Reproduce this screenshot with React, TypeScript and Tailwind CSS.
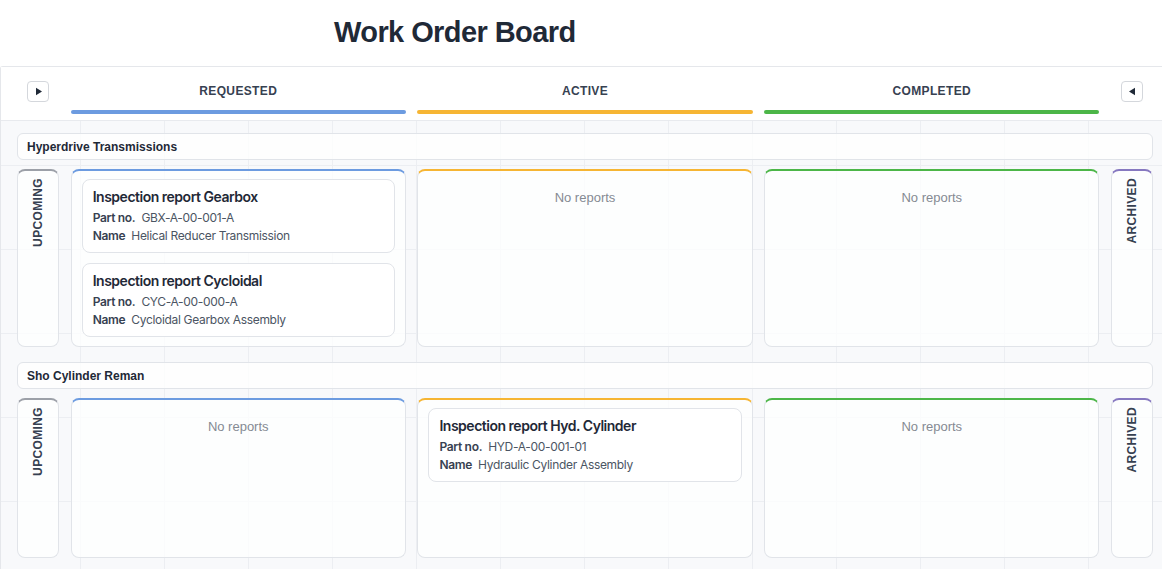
import React from "react";

type Card = { title: string; part: string; name: string };
type Group = {
  name: string;
  requested: Card[];
  active: Card[];
  completed: Card[];
};

const groups: Group[] = [
  {
    name: "Hyperdrive Transmissions",
    requested: [
      { title: "Inspection report Gearbox", part: "GBX-A-00-001-A", name: "Helical Reducer Transmission" },
      { title: "Inspection report Cycloidal", part: "CYC-A-00-000-A", name: "Cycloidal Gearbox Assembly" },
    ],
    active: [],
    completed: [],
  },
  {
    name: "Sho Cylinder Reman",
    requested: [],
    active: [{ title: "Inspection report Hyd. Cylinder", part: "HYD-A-00-001-01", name: "Hydraulic Cylinder Assembly" }],
    completed: [],
  },
];

const sans = "font-['Liberation_Sans',Arial,sans-serif]";

function Toggle({ dir }: { dir: "right" | "left" }) {
  return (
    <button className="w-[22px] h-[21px] rounded-[4px] border border-[#d4d7dc] bg-white flex items-center justify-center">
      <svg width="9" height="9" viewBox="0 0 9 9">
        {dir === "right" ? (
          <polygon points="2,0.8 8,4.5 2,8.2" fill="#1f2937" />
        ) : (
          <polygon points="7,0.8 1,4.5 7,8.2" fill="#1f2937" />
        )}
      </svg>
    </button>
  );
}

function HeaderLabel({ label, bar }: { label: string; bar: string }) {
  return (
    <div className="flex flex-col items-stretch pt-[16px]">
      <div className={`${sans} text-[12px] leading-[16px] font-bold tracking-[0.03em] text-[#374151] text-center`}>{label}</div>
      <div className={`mt-[11px] h-[4px] rounded-full ${bar}`} />
    </div>
  );
}

function ReportCard({ c }: { c: Card }) {
  return (
    <div className="bg-white border border-[#e1e4e9] rounded-lg px-[10px] pt-[7px] pb-[7px] font-['Inter',sans-serif] tracking-[-0.02em]">
      <div className="text-[14px] leading-[20px] font-semibold tracking-[-0.035em] text-[#1f2937]">{c.title}</div>
      <div className="mt-[2px] text-[12px] leading-[18px] text-[#4b5563]">
        <span className="font-semibold text-[#374151]">Part no.</span>
        <span className="ml-[6px]">{c.part}</span>
      </div>
      <div className="text-[12px] leading-[18px] text-[#4b5563]">
        <span className="font-semibold text-[#374151]">Name</span>
        <span className="ml-[6px]">{c.name}</span>
      </div>
    </div>
  );
}

function Lane({ cards, top, min }: { cards: Card[]; top: string; min: string }) {
  return (
    <div className={`rounded-lg border border-[#e1e4e9] border-t-2 ${top} bg-white/75 px-[10px] pt-[8px] pb-[9px] ${min}`}>
      {cards.length === 0 ? (
        <div className={`${sans} pt-[9px] text-center text-[13px] leading-[20px] text-[#858a93]`}>No reports</div>
      ) : (
        <div className="flex flex-col gap-[10px]">
          {cards.map((c) => (
            <ReportCard key={c.title} c={c} />
          ))}
        </div>
      )}
    </div>
  );
}

function SideLane({ label, top }: { label: string; top: string }) {
  return (
    <div className={`rounded-lg border border-[#e1e4e9] border-t-2 ${top} bg-white/75 flex justify-center pt-[7px]`}>
      <div
        className={`${sans} text-[12px] leading-[14px] font-bold tracking-[0.03em] text-[#374151] [writing-mode:vertical-rl] rotate-180 h-fit`}
      >
        {label}
      </div>
    </div>
  );
}

export default function App() {
  return (
    <div className="w-[1162px] h-[569px] overflow-hidden bg-white">
      <div className="h-[66px] flex items-center pl-[334px]">
        <h1 className={`${sans} text-[29px] font-bold tracking-[-0.02em] text-[#1f2937] leading-none pb-[1px]`}>Work Order Board</h1>
      </div>
      <div className="border-t border-l border-[#e5e7eb] rounded-tl-[3px]">
        <div className="grid grid-cols-[42px_1fr_1fr_1fr_42px] gap-x-[11.7px] pl-[16px] pr-[9px] h-[54px] border-b border-[#e8eaee] bg-white">
          <div className="flex justify-center pt-[14px]">
            <Toggle dir="right" />
          </div>
          <HeaderLabel label="REQUESTED" bar="bg-[#6c9be0]" />
          <HeaderLabel label="ACTIVE" bar="bg-[#f6b533]" />
          <HeaderLabel label="COMPLETED" bar="bg-[#4cb648]" />
          <div className="flex justify-center pt-[14px]">
            <Toggle dir="left" />
          </div>
        </div>
        <div className="bg-[#f8f9fb] bg-[linear-gradient(to_right,#eceef2_1px,transparent_1px),linear-gradient(to_bottom,#eceef2_1px,transparent_1px)] [background-size:84px_84px] [background-position:79px_44px] pl-[16px] pr-[9px] pt-[12px] pb-[20px] flex flex-col">
          {groups.map((g, i) => (
            <div key={g.name} className={i > 0 ? "mt-[15px]" : ""}>
              <div className={`${sans} h-[27px] rounded-md border border-[#e1e4e9] bg-white/80 px-[9px] flex items-center text-[12px] font-bold text-[#1f2937]`}>
                {g.name}
              </div>
              <div className="mt-[9px] grid grid-cols-[42px_1fr_1fr_1fr_42px] gap-x-[11.7px]">
                <SideLane label="UPCOMING" top="border-t-[#9ca0a8]" />
                <Lane cards={g.requested} top="border-t-[#6c9be0]" min="min-h-[160px]" />
                <Lane cards={g.active} top="border-t-[#f6b533]" min="min-h-[160px]" />
                <Lane cards={g.completed} top="border-t-[#4cb648]" min="min-h-[160px]" />
                <SideLane label="ARCHIVED" top="border-t-[#8678c0]" />
              </div>
            </div>
          ))}
        </div>
      </div>
    </div>
  );
}
